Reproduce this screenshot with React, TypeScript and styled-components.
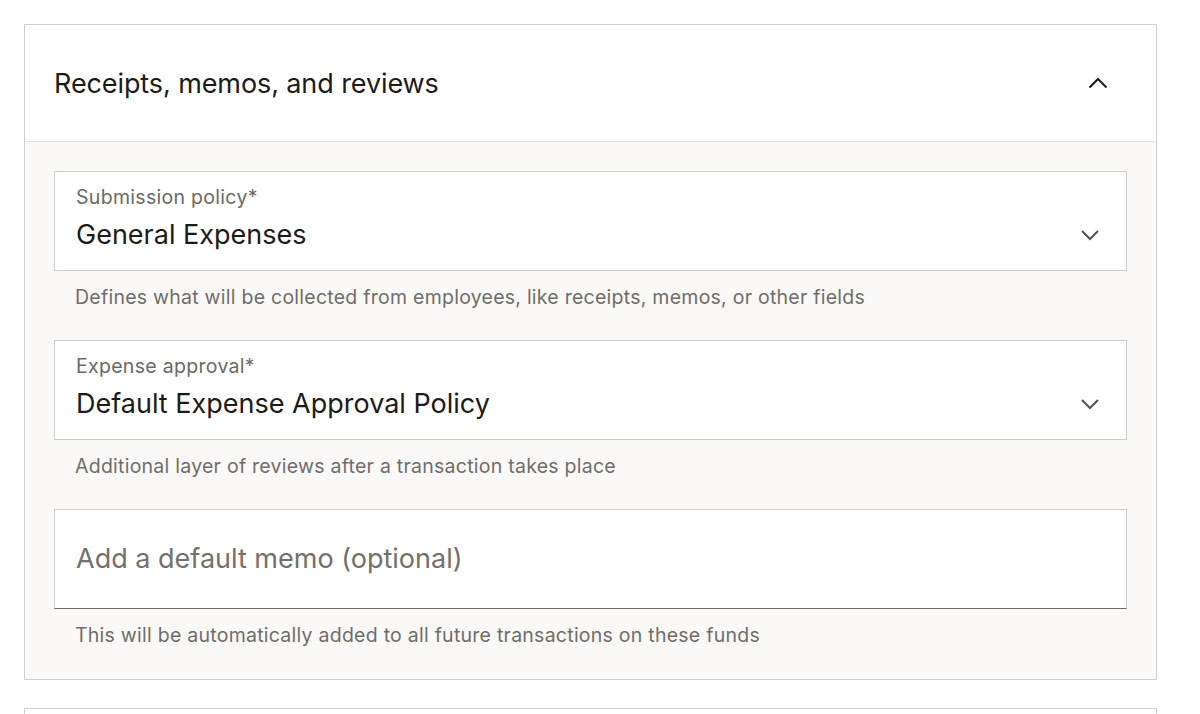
import React from 'react';
import styled, { createGlobalStyle } from 'styled-components';

const GlobalStyle = createGlobalStyle`
  html, body {
    margin: 0;
    padding: 0;
    background: #ffffff;
    font-family: Inter, "Noto Sans", sans-serif;
    color: #1c1b1a;
  }
`;

const Page = styled.div`
  padding: 24px 43px 0 24px;
  display: flex;
  flex-direction: column;
  gap: 28px;
`;

const Card = styled.section<{ $stub?: boolean }>`
  border: 1px solid #d3d0cc;
  background: #ffffff;
  height: ${(p) => (p.$stub ? '60px' : 'auto')};
`;

const Header = styled.div`
  height: 116px;
  display: flex;
  align-items: center;
  justify-content: space-between;
  padding: 0 48px 0 29px;
  border-bottom: 1px solid #e4e1dd;
`;

const Title = styled.h2`
  margin: 0;
  font-size: 27px;
  font-weight: 400;
  letter-spacing: -0.1px;
  color: #1c1b1a;
`;

const Body = styled.div`
  background: #faf9f7;
  padding: 29px 29px 32px 29px;
  display: flex;
  flex-direction: column;
  gap: 31px;
`;

const Field = styled.div``;

const Box = styled.div<{ $underline?: boolean }>`
  height: 100px;
  box-sizing: border-box;
  background: #ffffff;
  border: 1px solid #d0cdc9;
  border-bottom: ${(p) => (p.$underline ? '1.5px solid #6b6a67' : '1px solid #d0cdc9')};
  display: flex;
  align-items: center;
  padding: 0 26px 0 21px;
`;

const BoxText = styled.div`
  flex: 1;
  display: flex;
  flex-direction: column;
`;

const Label = styled.div`
  font-size: 19.5px;
  letter-spacing: 0.3px;
  line-height: 24px;
  color: #6b6967;
  margin-top: -3px;
`;

const Value = styled.div`
  font-size: 27px;
  line-height: 38px;
  color: #1c1b1a;
  margin-top: 7px;
`;

const Placeholder = styled.div`
  font-size: 27px;
  line-height: 38px;
  color: #71706d;
`;

const Helper = styled.div`
  margin-top: 14px;
  padding-left: 21px;
  font-size: 19.5px;
  letter-spacing: 0.25px;
  line-height: 24px;
  color: #6f6d6a;
`;

const ChevronSlot = styled.div<{ $offset: number }>`
  display: flex;
  margin-top: ${(p) => p.$offset}px;
`;

const Chevron = ({ up, color }: { up?: boolean; color: string }) => (
  <svg width="20" height="20" viewBox="0 0 20 20" fill="none">
    <path
      d={up ? 'M1.5 14.5L10 6L18.5 14.5' : 'M2 6L10 14L18 6'}
      stroke={color}
      strokeWidth="2"
    />
  </svg>
);

const SelectField = ({ label, value, helper }: { label: string; value: string; helper: string }) => (
  <Field>
    <Box>
      <BoxText>
        <Label>{label}</Label>
        <Value>{value}</Value>
      </BoxText>
      <ChevronSlot $offset={28}>
        <Chevron color="#55534f" />
      </ChevronSlot>
    </Box>
    <Helper>{helper}</Helper>
  </Field>
);

export default function App() {
  return (
    <>
      <GlobalStyle />
      <Page>
        <Card>
          <Header>
            <Title>Receipts, memos, and reviews</Title>
            <ChevronSlot $offset={0}>
              <Chevron up color="#1c1b1a" />
            </ChevronSlot>
          </Header>
          <Body>
            <SelectField
              label="Submission policy*"
              value="General Expenses"
              helper="Defines what will be collected from employees, like receipts, memos, or other fields"
            />
            <SelectField
              label="Expense approval*"
              value="Default Expense Approval Policy"
              helper="Additional layer of reviews after a transaction takes place"
            />
            <Field>
              <Box $underline>
                <Placeholder>Add a default memo (optional)</Placeholder>
              </Box>
              <Helper>This will be automatically added to all future transactions on these funds</Helper>
            </Field>
          </Body>
        </Card>
        <Card $stub />
      </Page>
    </>
  );
}
